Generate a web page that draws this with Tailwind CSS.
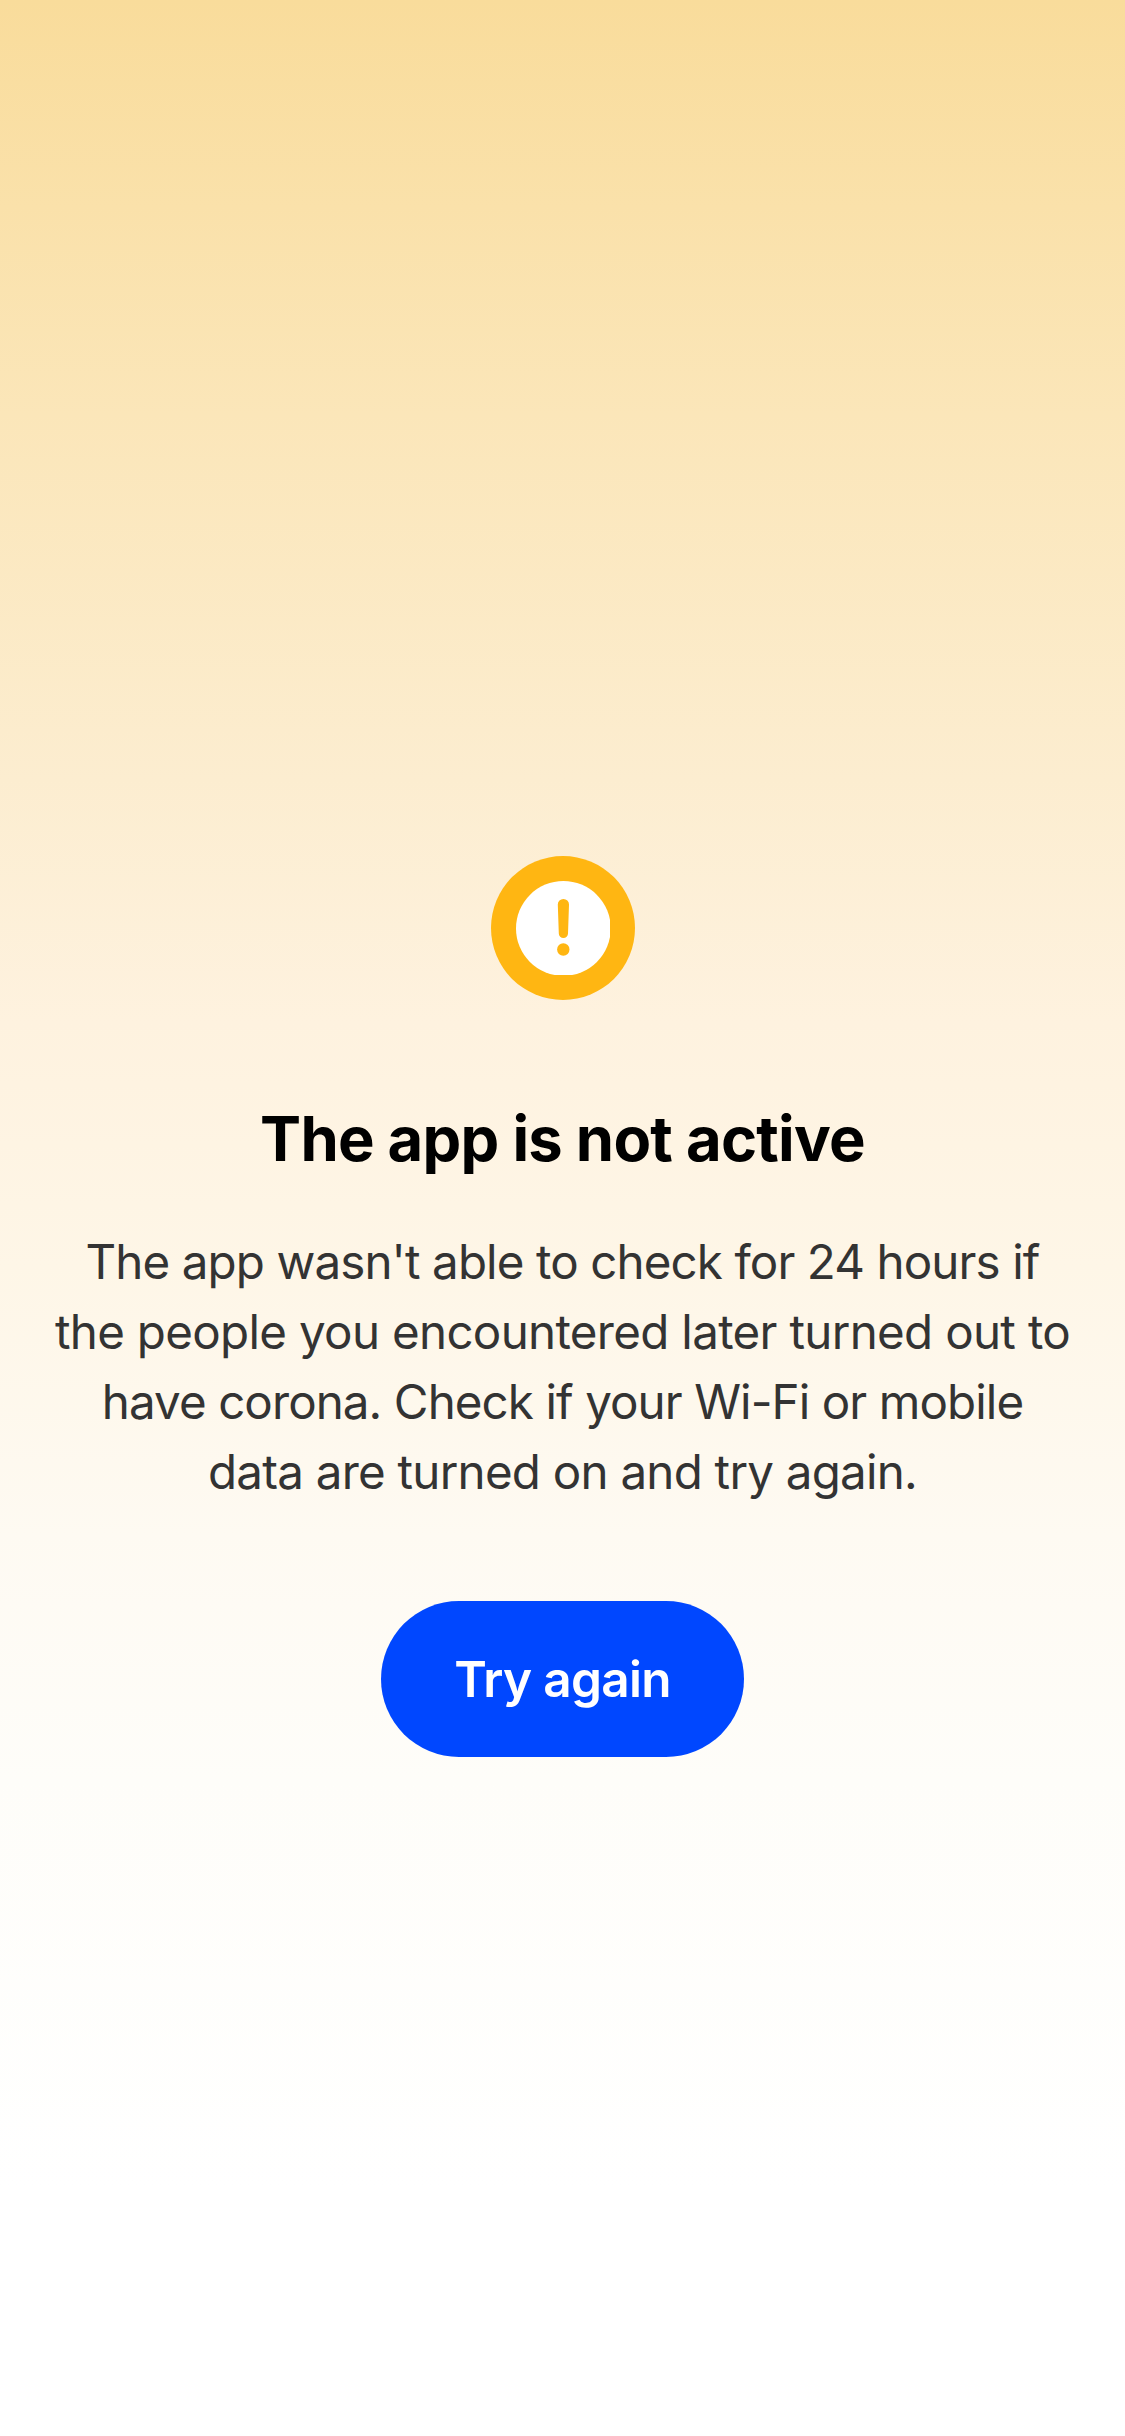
<!DOCTYPE html>
<html lang="en"><head><meta charset="utf-8"><title>App status</title>
<script src="https://cdn.jsdelivr.net/npm/@tailwindcss/browser@4"></script></head>
<body class="bg-white font-['Inter',sans-serif]">
<main class="w-[1125px] h-[2436px] flex flex-col items-center pt-[855px] bg-[linear-gradient(180deg,#f9dc9b_0%,#fbe6b9_17%,#fcedd0_32%,#fef2df_42%,#fef6e7_52%,#fefaf2_63%,#fefdf9_73%,#ffffff_90%)]">
<svg class="w-[145px] h-[146px] shrink-0" viewBox="0 0 145 146" aria-hidden="true">
<defs><clipPath id="inner"><rect width="120" height="120"/></clipPath></defs>
<circle cx="73" cy="73" r="72" fill="#ffb612"/><circle cx="73.4" cy="73.4" r="47.4" fill="#fff" clip-path="url(#inner)"/><path d="M67.8 49.5a5.6 5.6 0 0 1 11.2 0L78 78.5a4.6 4.6 0 0 1-9.2 0Z" fill="#ffb612"/><circle cx="73.3" cy="94.5" r="6.2" fill="#ffb612"/></svg>
<h1 class="mt-[100px] text-[61.5px] leading-[76px] font-bold tracking-[-0.75px] text-black whitespace-nowrap">The app is not active</h1>
<p class="mt-[50px] flex flex-col items-center text-[47.5px] leading-[70px] text-[#333333] whitespace-nowrap">
<span class="tracking-[-0.88px]">The app wasn't able to check for 24 hours if</span>
<span class="tracking-[-0.68px]">the people you encountered later turned out to</span>
<span class="tracking-[-0.91px]">have corona. Check if your Wi-Fi or mobile</span>
<span class="tracking-[-0.75px]">data are turned on and try again.</span></p>
<button class="mt-[94px] w-[363px] h-[156px] rounded-full bg-[#0047ff] text-white text-[49.5px] font-semibold tracking-[-0.7px]">Try again</button>
</main></body></html>
